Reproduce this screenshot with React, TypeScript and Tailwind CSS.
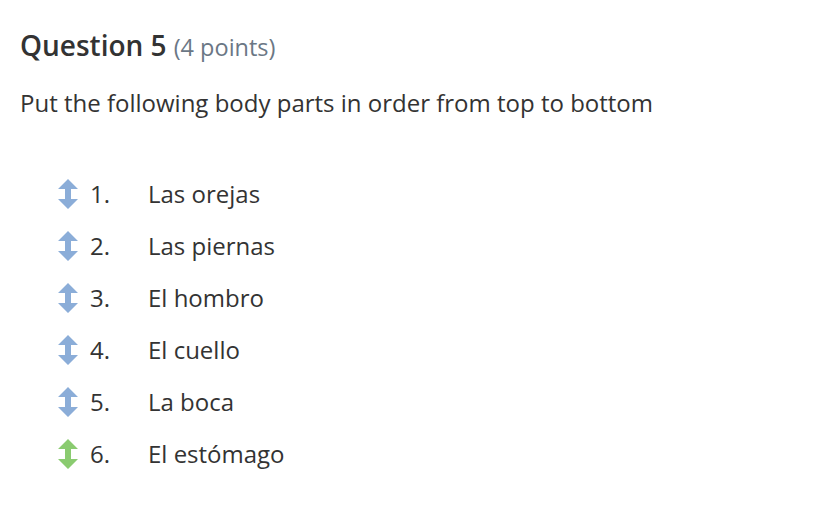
import React from 'react';

const items = ['Las orejas', 'Las piernas', 'El hombro', 'El cuello', 'La boca', 'El estómago'];

function MoveIcon({ color }: { color: string }) {
  return (
    <svg width="20" height="30" viewBox="0 0 20 30" className="shrink-0">
      <path d="M10 0 L20 10 L13 10 L13 20 L20 20 L10 30 L0 20 L7 20 L7 10 L0 10 Z" fill={color} />
    </svg>
  );
}

export default function App() {
  return (
    <div className="w-[836px] h-[526px] bg-white font-['Open_Sans',sans-serif] text-[#333] pl-[20px] pt-[26px]">
      <h2 className="flex items-baseline">
        <span className="text-[28px] font-semibold text-[#333] leading-[38px]">Question 5</span>
        <span className="ml-[7px] text-[23.5px] text-[#6b7785]">(4 points)</span>
      </h2>
      <p className="mt-[22px] text-[24px] leading-[32px]">Put the following body parts in order from top to bottom</p>

      <div className="mt-[49px] pl-[38px] flex flex-col">
        {items.map((item, i) => (
          <div key={i} className="flex items-center h-[52px]">
            <MoveIcon color={i === 5 ? '#8acb70' : '#8badd8'} />
            <span className="ml-[12px] w-[58px] text-[24px]">{i + 1}.</span>
            <span className="text-[24px]">{item}</span>
          </div>
        ))}
      </div>
    </div>
  );
}
